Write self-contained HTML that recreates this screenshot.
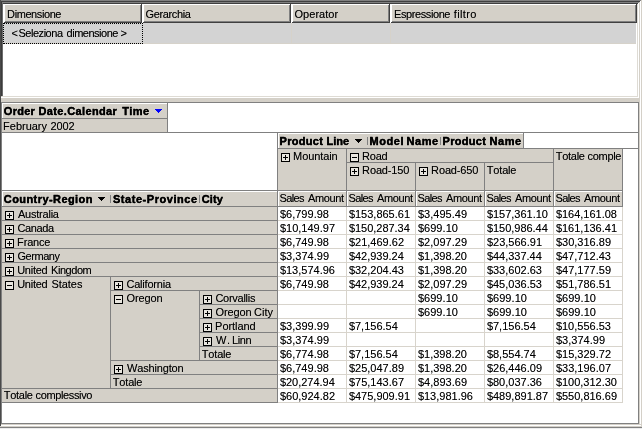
<!DOCTYPE html>
<html lang="it">
<head>
<meta charset="utf-8">
<title>Pivot</title>
<style>
html,body{margin:0;padding:0;}
body{width:642px;height:429px;overflow:hidden;background:#d4d0c8;position:relative;font-family:"Liberation Sans", sans-serif;font-size:11px;line-height:13px;color:#000;font-kerning:none;font-variant-ligatures:none;}
i{position:absolute;display:block;}
span{position:absolute;display:block;white-space:nowrap;height:14px;overflow:visible;text-shadow:0 0 0 rgba(0,0,0,.45);}
#t{position:absolute;left:0;top:0;width:642px;height:429px;will-change:transform;}
</style>
</head>
<body>
<i style="left:0px;top:0px;width:642px;height:429px;background:#d4d0c8"></i>
<i style="left:3px;top:4px;width:634px;height:92px;background:#fff"></i>
<i style="left:0px;top:0px;width:641px;height:1px;background:#808080"></i>
<i style="left:0px;top:1px;width:640px;height:1px;background:#404040"></i>
<i style="left:1px;top:2px;width:638px;height:1px;background:#808080"></i>
<i style="left:2px;top:3px;width:636px;height:1px;background:#404040"></i>
<i style="left:0px;top:0px;width:1px;height:426px;background:#4a4a4a"></i>
<i style="left:1px;top:2px;width:1px;height:94px;background:#3c3c3c"></i>
<i style="left:2px;top:3px;width:1px;height:93px;background:#6c6c6c"></i>
<i style="left:637px;top:4px;width:1px;height:93px;background:#dedbd4"></i>
<i style="left:638px;top:3px;width:1px;height:95px;background:#fff"></i>
<i style="left:639px;top:2px;width:1px;height:423px;background:#d4d0c8"></i>
<i style="left:640px;top:1px;width:1px;height:425px;background:#fff"></i>
<i style="left:641px;top:0px;width:1px;height:429px;background:#d4d0c8"></i>
<i style="left:2px;top:96px;width:636px;height:1px;background:#dedbd4"></i>
<i style="left:1px;top:97px;width:638px;height:1px;background:#fff"></i>
<i style="left:4px;top:4px;width:138px;height:19px;background:#d4d0c8"></i>
<i style="left:4px;top:4px;width:138px;height:1px;background:#fff"></i>
<i style="left:4px;top:4px;width:1px;height:19px;background:#fff"></i>
<i style="left:5px;top:21px;width:137px;height:1px;background:#808080"></i>
<i style="left:140px;top:5px;width:1px;height:17px;background:#808080"></i>
<i style="left:4px;top:22px;width:138px;height:1px;background:#404040"></i>
<i style="left:141px;top:4px;width:1px;height:19px;background:#404040"></i>
<i style="left:143px;top:4px;width:148px;height:19px;background:#d4d0c8"></i>
<i style="left:143px;top:4px;width:148px;height:1px;background:#fff"></i>
<i style="left:143px;top:4px;width:1px;height:19px;background:#fff"></i>
<i style="left:144px;top:21px;width:147px;height:1px;background:#808080"></i>
<i style="left:289px;top:5px;width:1px;height:17px;background:#808080"></i>
<i style="left:143px;top:22px;width:148px;height:1px;background:#404040"></i>
<i style="left:290px;top:4px;width:1px;height:19px;background:#404040"></i>
<i style="left:292px;top:4px;width:98px;height:19px;background:#d4d0c8"></i>
<i style="left:292px;top:4px;width:98px;height:1px;background:#fff"></i>
<i style="left:292px;top:4px;width:1px;height:19px;background:#fff"></i>
<i style="left:293px;top:21px;width:97px;height:1px;background:#808080"></i>
<i style="left:388px;top:5px;width:1px;height:17px;background:#808080"></i>
<i style="left:292px;top:22px;width:98px;height:1px;background:#404040"></i>
<i style="left:389px;top:4px;width:1px;height:19px;background:#404040"></i>
<i style="left:391px;top:4px;width:246px;height:19px;background:#d4d0c8"></i>
<i style="left:391px;top:4px;width:246px;height:1px;background:#fff"></i>
<i style="left:391px;top:4px;width:1px;height:19px;background:#fff"></i>
<i style="left:392px;top:21px;width:245px;height:1px;background:#808080"></i>
<i style="left:635px;top:5px;width:1px;height:17px;background:#808080"></i>
<i style="left:391px;top:22px;width:246px;height:1px;background:#404040"></i>
<i style="left:636px;top:4px;width:1px;height:19px;background:#404040"></i>
<i style="left:3px;top:23px;width:633px;height:20px;background:#d3d3d3"></i>
<i style="left:3px;top:43px;width:633px;height:1px;background:#d6d2ca"></i>
<i style="left:291px;top:23px;width:1px;height:21px;background:#d6d2ca"></i>
<i style="left:390px;top:23px;width:1px;height:21px;background:#d6d2ca"></i>
<i style="left:1px;top:102px;width:638px;height:322px;background:#fff"></i>
<i style="left:1px;top:102px;width:638px;height:1px;background:#808080"></i>
<i style="left:1px;top:423px;width:638px;height:1px;background:#808080"></i>
<i style="left:1px;top:102px;width:1px;height:322px;background:#808080"></i>
<i style="left:638px;top:102px;width:1px;height:322px;background:#808080"></i>
<i style="left:1px;top:424px;width:640px;height:1px;background:#d4d0c8"></i>
<i style="left:1px;top:425px;width:640px;height:1px;background:#fff"></i>
<i style="left:0px;top:426px;width:642px;height:1px;background:#d4d0c8"></i>
<i style="left:0px;top:427px;width:642px;height:1px;background:#808080"></i>
<i style="left:0px;top:428px;width:642px;height:1px;background:#ececec"></i>
<i style="left:2px;top:103px;width:165px;height:29px;background:#d4d0c8"></i>
<i style="left:2px;top:103px;width:165px;height:1px;background:#fff"></i>
<i style="left:2px;top:103px;width:1px;height:15px;background:#fff"></i>
<i style="left:2px;top:118px;width:165px;height:1px;background:#808080"></i>
<i style="left:167px;top:102px;width:1px;height:31px;background:#808080"></i>
<i style="left:1px;top:132px;width:638px;height:1px;background:#808080"></i>
<i style="left:155px;top:109px;width:7px;height:1px;background:#0000ff"></i>
<i style="left:156px;top:110px;width:5px;height:1px;background:#0000ff"></i>
<i style="left:157px;top:111px;width:3px;height:1px;background:#0000ff"></i>
<i style="left:158px;top:112px;width:1px;height:1px;background:#0000ff"></i>
<i style="left:277px;top:132px;width:1px;height:271px;background:#808080"></i>
<i style="left:278px;top:133px;width:245px;height:15px;background:#d4d0c8"></i>
<i style="left:278px;top:133px;width:245px;height:1px;background:#fff"></i>
<i style="left:278px;top:133px;width:1px;height:15px;background:#fff"></i>
<i style="left:523px;top:132px;width:1px;height:17px;background:#808080"></i>
<i style="left:277px;top:148px;width:362px;height:1px;background:#808080"></i>
<i style="left:355px;top:139px;width:7px;height:1px;background:#000"></i>
<i style="left:356px;top:140px;width:5px;height:1px;background:#000"></i>
<i style="left:357px;top:141px;width:3px;height:1px;background:#000"></i>
<i style="left:358px;top:142px;width:1px;height:1px;background:#000"></i>
<i style="left:367px;top:137px;width:1px;height:8px;background:#808080"></i>
<i style="left:440px;top:137px;width:1px;height:8px;background:#808080"></i>
<i style="left:278px;top:149px;width:344px;height:41px;background:#d4d0c8"></i>
<i style="left:346px;top:148px;width:1px;height:43px;background:#808080"></i>
<i style="left:553px;top:148px;width:1px;height:43px;background:#808080"></i>
<i style="left:415px;top:162px;width:1px;height:29px;background:#808080"></i>
<i style="left:484px;top:162px;width:1px;height:29px;background:#808080"></i>
<i style="left:622px;top:148px;width:1px;height:59px;background:#808080"></i>
<i style="left:346px;top:162px;width:208px;height:1px;background:#808080"></i>
<i style="left:1px;top:190px;width:622px;height:1px;background:#808080"></i>
<i style="left:281px;top:153px;width:9px;height:9px;background:#000"></i>
<i style="left:282px;top:154px;width:7px;height:7px;background:#e9e6df"></i>
<i style="left:283px;top:157px;width:5px;height:1px;background:#000"></i>
<i style="left:285px;top:155px;width:1px;height:5px;background:#000"></i>
<i style="left:350px;top:153px;width:9px;height:9px;background:#000"></i>
<i style="left:351px;top:154px;width:7px;height:7px;background:#e9e6df"></i>
<i style="left:352px;top:157px;width:5px;height:1px;background:#000"></i>
<i style="left:350px;top:167px;width:9px;height:9px;background:#000"></i>
<i style="left:351px;top:168px;width:7px;height:7px;background:#e9e6df"></i>
<i style="left:352px;top:171px;width:5px;height:1px;background:#000"></i>
<i style="left:354px;top:169px;width:1px;height:5px;background:#000"></i>
<i style="left:419px;top:167px;width:9px;height:9px;background:#000"></i>
<i style="left:420px;top:168px;width:7px;height:7px;background:#e9e6df"></i>
<i style="left:421px;top:171px;width:5px;height:1px;background:#000"></i>
<i style="left:423px;top:169px;width:1px;height:5px;background:#000"></i>
<i style="left:2px;top:191px;width:620px;height:15px;background:#d4d0c8"></i>
<i style="left:2px;top:191px;width:620px;height:1px;background:#fff"></i>
<i style="left:2px;top:191px;width:1px;height:15px;background:#fff"></i>
<i style="left:277px;top:190px;width:1px;height:17px;background:#808080"></i>
<i style="left:278px;top:191px;width:1px;height:15px;background:#fff"></i>
<i style="left:346px;top:190px;width:1px;height:17px;background:#808080"></i>
<i style="left:347px;top:191px;width:1px;height:15px;background:#fff"></i>
<i style="left:415px;top:190px;width:1px;height:17px;background:#808080"></i>
<i style="left:416px;top:191px;width:1px;height:15px;background:#fff"></i>
<i style="left:484px;top:190px;width:1px;height:17px;background:#808080"></i>
<i style="left:485px;top:191px;width:1px;height:15px;background:#fff"></i>
<i style="left:553px;top:190px;width:1px;height:17px;background:#808080"></i>
<i style="left:554px;top:191px;width:1px;height:15px;background:#fff"></i>
<i style="left:1px;top:206px;width:622px;height:1px;background:#808080"></i>
<i style="left:98px;top:197px;width:7px;height:1px;background:#000"></i>
<i style="left:99px;top:198px;width:5px;height:1px;background:#000"></i>
<i style="left:100px;top:199px;width:3px;height:1px;background:#000"></i>
<i style="left:101px;top:200px;width:1px;height:1px;background:#000"></i>
<i style="left:110px;top:195px;width:1px;height:8px;background:#808080"></i>
<i style="left:199px;top:195px;width:1px;height:8px;background:#808080"></i>
<i style="left:2px;top:207px;width:275px;height:195px;background:#d4d0c8"></i>
<i style="left:1px;top:206px;width:277px;height:1px;background:#808080"></i>
<i style="left:5px;top:211px;width:9px;height:9px;background:#000"></i>
<i style="left:6px;top:212px;width:7px;height:7px;background:#e9e6df"></i>
<i style="left:7px;top:215px;width:5px;height:1px;background:#000"></i>
<i style="left:9px;top:213px;width:1px;height:5px;background:#000"></i>
<i style="left:1px;top:220px;width:277px;height:1px;background:#808080"></i>
<i style="left:5px;top:225px;width:9px;height:9px;background:#000"></i>
<i style="left:6px;top:226px;width:7px;height:7px;background:#e9e6df"></i>
<i style="left:7px;top:229px;width:5px;height:1px;background:#000"></i>
<i style="left:9px;top:227px;width:1px;height:5px;background:#000"></i>
<i style="left:1px;top:234px;width:277px;height:1px;background:#808080"></i>
<i style="left:5px;top:239px;width:9px;height:9px;background:#000"></i>
<i style="left:6px;top:240px;width:7px;height:7px;background:#e9e6df"></i>
<i style="left:7px;top:243px;width:5px;height:1px;background:#000"></i>
<i style="left:9px;top:241px;width:1px;height:5px;background:#000"></i>
<i style="left:1px;top:248px;width:277px;height:1px;background:#808080"></i>
<i style="left:5px;top:253px;width:9px;height:9px;background:#000"></i>
<i style="left:6px;top:254px;width:7px;height:7px;background:#e9e6df"></i>
<i style="left:7px;top:257px;width:5px;height:1px;background:#000"></i>
<i style="left:9px;top:255px;width:1px;height:5px;background:#000"></i>
<i style="left:1px;top:262px;width:277px;height:1px;background:#808080"></i>
<i style="left:5px;top:267px;width:9px;height:9px;background:#000"></i>
<i style="left:6px;top:268px;width:7px;height:7px;background:#e9e6df"></i>
<i style="left:7px;top:271px;width:5px;height:1px;background:#000"></i>
<i style="left:9px;top:269px;width:1px;height:5px;background:#000"></i>
<i style="left:1px;top:276px;width:277px;height:1px;background:#808080"></i>
<i style="left:5px;top:281px;width:9px;height:9px;background:#000"></i>
<i style="left:6px;top:282px;width:7px;height:7px;background:#e9e6df"></i>
<i style="left:7px;top:285px;width:5px;height:1px;background:#000"></i>
<i style="left:110px;top:276px;width:1px;height:113px;background:#808080"></i>
<i style="left:114px;top:281px;width:9px;height:9px;background:#000"></i>
<i style="left:115px;top:282px;width:7px;height:7px;background:#e9e6df"></i>
<i style="left:116px;top:285px;width:5px;height:1px;background:#000"></i>
<i style="left:118px;top:283px;width:1px;height:5px;background:#000"></i>
<i style="left:110px;top:290px;width:168px;height:1px;background:#808080"></i>
<i style="left:114px;top:295px;width:9px;height:9px;background:#000"></i>
<i style="left:115px;top:296px;width:7px;height:7px;background:#e9e6df"></i>
<i style="left:116px;top:299px;width:5px;height:1px;background:#000"></i>
<i style="left:199px;top:290px;width:1px;height:71px;background:#808080"></i>
<i style="left:203px;top:295px;width:9px;height:9px;background:#000"></i>
<i style="left:204px;top:296px;width:7px;height:7px;background:#e9e6df"></i>
<i style="left:205px;top:299px;width:5px;height:1px;background:#000"></i>
<i style="left:207px;top:297px;width:1px;height:5px;background:#000"></i>
<i style="left:199px;top:304px;width:79px;height:1px;background:#808080"></i>
<i style="left:203px;top:309px;width:9px;height:9px;background:#000"></i>
<i style="left:204px;top:310px;width:7px;height:7px;background:#e9e6df"></i>
<i style="left:205px;top:313px;width:5px;height:1px;background:#000"></i>
<i style="left:207px;top:311px;width:1px;height:5px;background:#000"></i>
<i style="left:199px;top:318px;width:79px;height:1px;background:#808080"></i>
<i style="left:203px;top:323px;width:9px;height:9px;background:#000"></i>
<i style="left:204px;top:324px;width:7px;height:7px;background:#e9e6df"></i>
<i style="left:205px;top:327px;width:5px;height:1px;background:#000"></i>
<i style="left:207px;top:325px;width:1px;height:5px;background:#000"></i>
<i style="left:199px;top:332px;width:79px;height:1px;background:#808080"></i>
<i style="left:203px;top:337px;width:9px;height:9px;background:#000"></i>
<i style="left:204px;top:338px;width:7px;height:7px;background:#e9e6df"></i>
<i style="left:205px;top:341px;width:5px;height:1px;background:#000"></i>
<i style="left:207px;top:339px;width:1px;height:5px;background:#000"></i>
<i style="left:199px;top:346px;width:79px;height:1px;background:#808080"></i>
<i style="left:110px;top:360px;width:168px;height:1px;background:#808080"></i>
<i style="left:114px;top:365px;width:9px;height:9px;background:#000"></i>
<i style="left:115px;top:366px;width:7px;height:7px;background:#e9e6df"></i>
<i style="left:116px;top:369px;width:5px;height:1px;background:#000"></i>
<i style="left:118px;top:367px;width:1px;height:5px;background:#000"></i>
<i style="left:110px;top:374px;width:168px;height:1px;background:#808080"></i>
<i style="left:1px;top:388px;width:277px;height:1px;background:#808080"></i>
<i style="left:1px;top:402px;width:277px;height:1px;background:#808080"></i>
<i style="left:278px;top:220px;width:345px;height:1px;background:#d8d4cc"></i>
<i style="left:278px;top:234px;width:345px;height:1px;background:#d8d4cc"></i>
<i style="left:278px;top:248px;width:345px;height:1px;background:#d8d4cc"></i>
<i style="left:278px;top:262px;width:345px;height:1px;background:#d8d4cc"></i>
<i style="left:278px;top:276px;width:345px;height:1px;background:#d8d4cc"></i>
<i style="left:278px;top:290px;width:345px;height:1px;background:#d8d4cc"></i>
<i style="left:278px;top:304px;width:345px;height:1px;background:#d8d4cc"></i>
<i style="left:278px;top:318px;width:345px;height:1px;background:#d8d4cc"></i>
<i style="left:278px;top:332px;width:345px;height:1px;background:#d8d4cc"></i>
<i style="left:278px;top:346px;width:345px;height:1px;background:#d8d4cc"></i>
<i style="left:278px;top:360px;width:345px;height:1px;background:#d8d4cc"></i>
<i style="left:278px;top:374px;width:345px;height:1px;background:#d8d4cc"></i>
<i style="left:278px;top:388px;width:345px;height:1px;background:#d8d4cc"></i>
<i style="left:278px;top:402px;width:345px;height:1px;background:#d8d4cc"></i>
<i style="left:346px;top:207px;width:1px;height:196px;background:#d8d4cc"></i>
<i style="left:415px;top:207px;width:1px;height:196px;background:#d8d4cc"></i>
<i style="left:484px;top:207px;width:1px;height:196px;background:#d8d4cc"></i>
<i style="left:553px;top:207px;width:1px;height:196px;background:#d8d4cc"></i>
<i style="left:622px;top:207px;width:1px;height:196px;background:#d8d4cc"></i>
<div id="t">
<i style="left:3px;top:23px;width:138px;height:19px;border:1px dotted #000"></i>
<span style="left:7.10px;top:8px;letter-spacing:-0.410px;">Dimensione</span>
<span style="left:145.45px;top:8px;letter-spacing:-0.343px;">Gerarchia</span>
<span style="left:294.48px;top:8px;letter-spacing:0.042px;">Operator</span>
<span style="left:394.10px;top:8px;letter-spacing:-0.414px;">Espressione</span>
<span style="left:453.84px;top:8px;letter-spacing:0.367px;">filtro</span>
<span style="left:11.46px;top:27px;letter-spacing:0.000px;">&lt;</span>
<span style="left:18.50px;top:27px;letter-spacing:-0.477px;">Seleziona</span>
<span style="left:66.54px;top:27px;letter-spacing:-0.478px;">dimensione</span>
<span style="left:120.46px;top:27px;letter-spacing:0.000px;">&gt;</span>
<span style="left:3.85px;top:105px;letter-spacing:0.266px;font-weight:bold;text-shadow:0 0 0 #000;-webkit-text-stroke:0.3px #000;">Order</span>
<span style="left:38.56px;top:105px;letter-spacing:0.361px;font-weight:bold;text-shadow:0 0 0 #000;-webkit-text-stroke:0.3px #000;">Date.Calendar</span>
<span style="left:122.18px;top:105px;letter-spacing:0.409px;font-weight:bold;text-shadow:0 0 0 #000;-webkit-text-stroke:0.3px #000;">Time</span>
<span style="left:3.10px;top:120px;letter-spacing:-0.013px;">February</span>
<span style="left:50.45px;top:120px;letter-spacing:-0.121px;">2002</span>
<span style="left:279.56px;top:135px;letter-spacing:0.286px;font-weight:bold;text-shadow:0 0 0 #000;-webkit-text-stroke:0.3px #000;">Product</span>
<span style="left:326.56px;top:135px;letter-spacing:-0.033px;font-weight:bold;text-shadow:0 0 0 #000;-webkit-text-stroke:0.3px #000;">Line</span>
<span style="left:369.56px;top:135px;letter-spacing:0.535px;font-weight:bold;text-shadow:0 0 0 #000;-webkit-text-stroke:0.3px #000;">Model</span>
<span style="left:406.56px;top:135px;letter-spacing:0.517px;font-weight:bold;text-shadow:0 0 0 #000;-webkit-text-stroke:0.3px #000;">Name</span>
<span style="left:442.56px;top:135px;letter-spacing:0.286px;font-weight:bold;text-shadow:0 0 0 #000;-webkit-text-stroke:0.3px #000;">Product</span>
<span style="left:489.56px;top:135px;letter-spacing:0.517px;font-weight:bold;text-shadow:0 0 0 #000;-webkit-text-stroke:0.3px #000;">Name</span>
<span style="left:293.10px;top:150px;letter-spacing:-0.091px;">Mountain</span>
<span style="left:362.10px;top:150px;letter-spacing:-0.229px;">Road</span>
<span style="left:362.10px;top:164px;letter-spacing:-0.140px;">Road-150</span>
<span style="left:431.10px;top:164px;letter-spacing:-0.140px;">Road-650</span>
<span style="left:486.75px;top:164px;letter-spacing:-0.167px;">Totale</span>
<span style="left:555.75px;top:150px;letter-spacing:-0.267px;">Totale</span>
<span style="left:587.53px;top:150px;letter-spacing:-0.301px;">comple</span>
<span style="left:279.50px;top:192px;letter-spacing:-0.655px;">Sales</span>
<span style="left:307.98px;top:192px;letter-spacing:-0.361px;">Amount</span>
<span style="left:348.50px;top:192px;letter-spacing:-0.655px;">Sales</span>
<span style="left:376.98px;top:192px;letter-spacing:-0.361px;">Amount</span>
<span style="left:417.50px;top:192px;letter-spacing:-0.655px;">Sales</span>
<span style="left:445.98px;top:192px;letter-spacing:-0.361px;">Amount</span>
<span style="left:486.50px;top:192px;letter-spacing:-0.655px;">Sales</span>
<span style="left:514.98px;top:192px;letter-spacing:-0.361px;">Amount</span>
<span style="left:555.50px;top:192px;letter-spacing:-0.655px;">Sales</span>
<span style="left:583.98px;top:192px;letter-spacing:-0.361px;">Amount</span>
<span style="left:3.85px;top:193px;letter-spacing:0.418px;font-weight:bold;text-shadow:0 0 0 #000;-webkit-text-stroke:0.3px #000;">Country-Region</span>
<span style="left:112.98px;top:193px;letter-spacing:0.544px;font-weight:bold;text-shadow:0 0 0 #000;-webkit-text-stroke:0.3px #000;">State-Province</span>
<span style="left:201.85px;top:193px;letter-spacing:0.043px;font-weight:bold;text-shadow:0 0 0 #000;-webkit-text-stroke:0.3px #000;">City</span>
<span style="left:17.98px;top:208px;letter-spacing:-0.222px;">Australia</span>
<span style="left:17.44px;top:222px;letter-spacing:-0.395px;">Canada</span>
<span style="left:17.10px;top:236px;letter-spacing:-0.169px;">France</span>
<span style="left:17.45px;top:250px;letter-spacing:-0.443px;">Germany</span>
<span style="left:17.15px;top:264px;letter-spacing:-0.248px;">United</span>
<span style="left:51.10px;top:264px;letter-spacing:-0.465px;">Kingdom</span>
<span style="left:17.15px;top:278px;letter-spacing:-0.248px;">United</span>
<span style="left:51.50px;top:278px;letter-spacing:-0.058px;">States</span>
<span style="left:126.44px;top:278px;letter-spacing:-0.212px;">California</span>
<span style="left:126.48px;top:292px;letter-spacing:-0.091px;">Oregon</span>
<span style="left:215.44px;top:292px;letter-spacing:-0.277px;">Corvallis</span>
<span style="left:215.48px;top:306px;letter-spacing:-0.091px;">Oregon</span>
<span style="left:253.94px;top:306px;letter-spacing:0.045px;">City</span>
<span style="left:215.10px;top:320px;letter-spacing:-0.051px;">Portland</span>
<span style="left:215.95px;top:334px;letter-spacing:0.614px;">W.</span>
<span style="left:232.10px;top:334px;letter-spacing:-0.393px;">Linn</span>
<span style="left:201.75px;top:348px;letter-spacing:-0.167px;">Totale</span>
<span style="left:126.95px;top:362px;letter-spacing:-0.147px;">Washington</span>
<span style="left:112.75px;top:376px;letter-spacing:-0.167px;">Totale</span>
<span style="left:3.75px;top:389px;letter-spacing:-0.267px;">Totale</span>
<span style="left:35.53px;top:389px;letter-spacing:-0.359px;">complessivo</span>
<span style="left:279.88px;top:208px;letter-spacing:0.020px;">$6,799.98</span>
<span style="left:348.88px;top:208px;letter-spacing:-0.002px;">$153,865.61</span>
<span style="left:417.88px;top:208px;letter-spacing:0.025px;">$3,495.49</span>
<span style="left:486.88px;top:208px;letter-spacing:-0.012px;">$157,361.10</span>
<span style="left:555.88px;top:208px;letter-spacing:-0.008px;">$164,161.08</span>
<span style="left:279.88px;top:222px;letter-spacing:0.013px;">$10,149.97</span>
<span style="left:348.88px;top:222px;letter-spacing:-0.023px;">$150,287.34</span>
<span style="left:417.88px;top:222px;letter-spacing:0.048px;">$699.10</span>
<span style="left:486.88px;top:222px;letter-spacing:-0.023px;">$150,986.44</span>
<span style="left:555.88px;top:222px;letter-spacing:-0.002px;">$161,136.41</span>
<span style="left:279.88px;top:236px;letter-spacing:0.020px;">$6,749.98</span>
<span style="left:348.88px;top:236px;letter-spacing:0.013px;">$21,469.62</span>
<span style="left:417.88px;top:236px;letter-spacing:0.025px;">$2,097.29</span>
<span style="left:486.88px;top:236px;letter-spacing:0.011px;">$23,566.91</span>
<span style="left:555.88px;top:236px;letter-spacing:0.009px;">$30,316.89</span>
<span style="left:279.88px;top:250px;letter-spacing:0.025px;">$3,374.99</span>
<span style="left:348.88px;top:250px;letter-spacing:-0.013px;">$42,939.24</span>
<span style="left:417.88px;top:250px;letter-spacing:0.014px;">$1,398.20</span>
<span style="left:486.88px;top:250px;letter-spacing:-0.013px;">$44,337.44</span>
<span style="left:555.88px;top:250px;letter-spacing:0.005px;">$47,712.43</span>
<span style="left:279.88px;top:264px;letter-spacing:0.005px;">$13,574.96</span>
<span style="left:348.88px;top:264px;letter-spacing:0.005px;">$32,204.43</span>
<span style="left:417.88px;top:264px;letter-spacing:0.014px;">$1,398.20</span>
<span style="left:486.88px;top:264px;letter-spacing:0.005px;">$33,602.63</span>
<span style="left:555.88px;top:264px;letter-spacing:0.009px;">$47,177.59</span>
<span style="left:279.88px;top:278px;letter-spacing:0.020px;">$6,749.98</span>
<span style="left:348.88px;top:278px;letter-spacing:-0.013px;">$42,939.24</span>
<span style="left:417.88px;top:278px;letter-spacing:0.025px;">$2,097.29</span>
<span style="left:486.88px;top:278px;letter-spacing:0.005px;">$45,036.53</span>
<span style="left:555.88px;top:278px;letter-spacing:0.011px;">$51,786.51</span>
<span style="left:417.88px;top:292px;letter-spacing:0.048px;">$699.10</span>
<span style="left:486.88px;top:292px;letter-spacing:0.048px;">$699.10</span>
<span style="left:555.88px;top:292px;letter-spacing:0.048px;">$699.10</span>
<span style="left:417.88px;top:306px;letter-spacing:0.048px;">$699.10</span>
<span style="left:486.88px;top:306px;letter-spacing:0.048px;">$699.10</span>
<span style="left:555.88px;top:306px;letter-spacing:0.048px;">$699.10</span>
<span style="left:279.88px;top:320px;letter-spacing:0.025px;">$3,399.99</span>
<span style="left:348.88px;top:320px;letter-spacing:0.001px;">$7,156.54</span>
<span style="left:486.88px;top:320px;letter-spacing:0.001px;">$7,156.54</span>
<span style="left:555.88px;top:320px;letter-spacing:0.005px;">$10,556.53</span>
<span style="left:279.88px;top:334px;letter-spacing:0.025px;">$3,374.99</span>
<span style="left:555.88px;top:334px;letter-spacing:0.025px;">$3,374.99</span>
<span style="left:279.88px;top:348px;letter-spacing:0.020px;">$6,774.98</span>
<span style="left:348.88px;top:348px;letter-spacing:0.001px;">$7,156.54</span>
<span style="left:417.88px;top:348px;letter-spacing:0.014px;">$1,398.20</span>
<span style="left:486.88px;top:348px;letter-spacing:0.001px;">$8,554.74</span>
<span style="left:555.88px;top:348px;letter-spacing:0.013px;">$15,329.72</span>
<span style="left:279.88px;top:362px;letter-spacing:0.020px;">$6,749.98</span>
<span style="left:348.88px;top:362px;letter-spacing:0.009px;">$25,047.89</span>
<span style="left:417.88px;top:362px;letter-spacing:0.014px;">$1,398.20</span>
<span style="left:486.88px;top:362px;letter-spacing:0.009px;">$26,446.09</span>
<span style="left:555.88px;top:362px;letter-spacing:0.013px;">$33,196.07</span>
<span style="left:279.88px;top:376px;letter-spacing:-0.013px;">$20,274.94</span>
<span style="left:348.88px;top:376px;letter-spacing:0.013px;">$75,143.67</span>
<span style="left:417.88px;top:376px;letter-spacing:0.025px;">$4,893.69</span>
<span style="left:486.88px;top:376px;letter-spacing:0.005px;">$80,037.36</span>
<span style="left:555.88px;top:376px;letter-spacing:-0.012px;">$100,312.30</span>
<span style="left:279.88px;top:390px;letter-spacing:0.013px;">$60,924.82</span>
<span style="left:348.88px;top:390px;letter-spacing:-0.002px;">$475,909.91</span>
<span style="left:417.88px;top:390px;letter-spacing:0.005px;">$13,981.96</span>
<span style="left:486.88px;top:390px;letter-spacing:0.000px;">$489,891.87</span>
<span style="left:555.88px;top:390px;letter-spacing:-0.003px;">$550,816.69</span>
</div>
</body>
</html>
